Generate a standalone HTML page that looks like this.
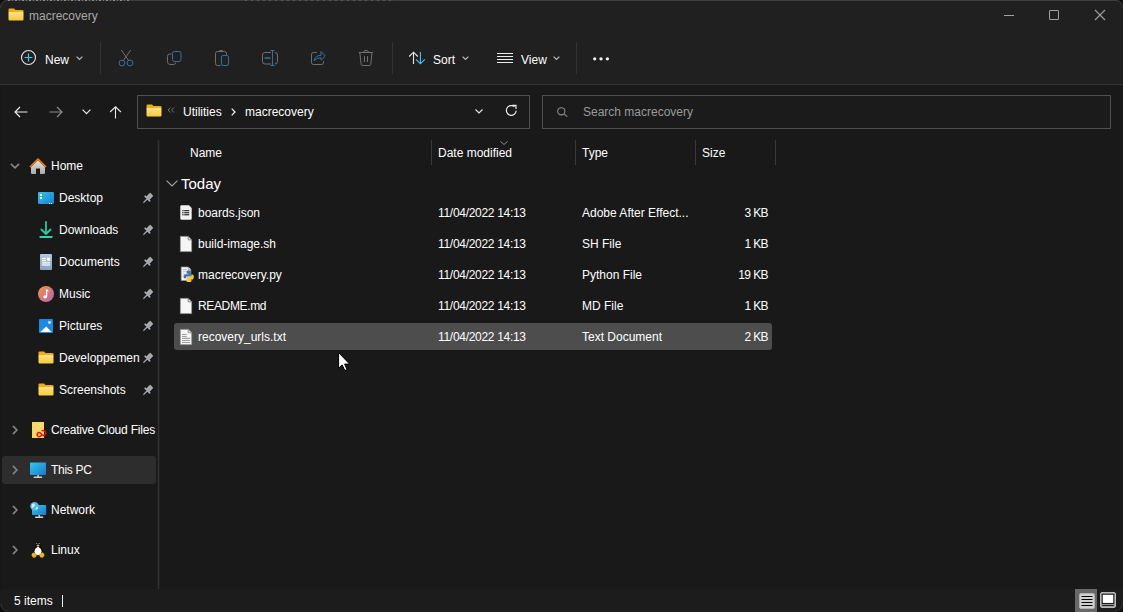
<!DOCTYPE html>
<html><head><meta charset="utf-8">
<style>
*{margin:0;padding:0;box-sizing:border-box}
html,body{width:1123px;height:612px;overflow:hidden;background:#191919;font-family:"Liberation Sans",sans-serif;color:#fff;position:relative}
.a{position:absolute}
.t{position:absolute;white-space:nowrap;font-size:12px;line-height:14px}
svg{position:absolute;overflow:visible}
.sep{position:absolute;width:1px;background:#3a3a3a}
.box{position:absolute;border:1px solid #4e4e4e;background:#1b1b1b}
</style></head><body>
<!-- title + toolbar -->
<div class="a" style="left:0;top:0;width:1123px;height:84px;background:#202020"></div>
<div class="a" style="left:0;top:84px;width:1123px;height:1px;background:#343434"></div>
<!-- top border row -->
<div class="a" style="left:0;top:0;width:1123px;height:1px;background:#3e3e3e"></div>
<div class="a" style="left:8px;top:0;width:122px;height:1px;background:repeating-linear-gradient(90deg,#8a8a8a 0 2px,#3a3a3a 2px 4px,#7a7a7a 4px 5px,#383838 5px 7px)"></div>
<div class="a" style="left:245px;top:0;width:150px;height:1px;background:repeating-linear-gradient(90deg,#5a5a5a 0 2px,#3a3a3a 2px 6px)"></div>
<svg style="left:0;top:0" width="9" height="9" viewBox="0 0 9 9"><path d="M0 0 H8 Q0.5 0.3 0 8 Z" fill="#0e0e0e"/><path d="M7.5 0.5 Q0.7 0.7 0.5 7.5" fill="none" stroke="#3a3a3a" stroke-width="1"/></svg>
<svg style="left:1114px;top:0" width="9" height="9" viewBox="0 0 9 9"><path d="M9 0 H1 Q8.5 0.3 9 8 Z" fill="#0e0e14"/><path d="M1.5 0.5 Q8.3 0.7 8.5 7.5" fill="none" stroke="#3a3a3a" stroke-width="1"/></svg>
<!-- title -->
<svg style="left:8px;top:8px" width="16" height="13" viewBox="0 0 16 13">
  <defs><linearGradient id="fg" x1="0" y1="0" x2="0" y2="1"><stop offset="0" stop-color="#ffe38a"/><stop offset="1" stop-color="#f9c93a"/></linearGradient></defs>
  <path d="M0.5 1.5 Q0.5 0.5 1.5 0.5 H6 L7.5 2 H14.5 Q15.5 2 15.5 3 V4 H0.5 Z" fill="#f2ae10"/>
  <path d="M0.5 4 H15.5 V11.5 Q15.5 12.5 14.5 12.5 H1.5 Q0.5 12.5 0.5 11.5 Z" fill="url(#fg)"/>
</svg>
<div class="t" style="left:29px;top:9px;color:#a8a8a8">macrecovery</div>

<!-- window controls -->
<div class="a" style="left:1004px;top:15px;width:10px;height:1px;background:#a0a0a0"></div>
<div class="a" style="left:1049px;top:10px;width:10px;height:10px;border:1px solid #a0a0a0;border-radius:1px"></div>
<svg style="left:1095px;top:10px" width="10" height="10" viewBox="0 0 10 10"><path d="M0 0 L10 10 M10 0 L0 10" stroke="#a0a0a0" stroke-width="1.1"/></svg>


<!-- toolbar -->
<svg style="left:0;top:0" width="1" height="1"></svg>
<svg style="left:21px;top:50px" width="15" height="15" viewBox="0 0 15 15">
  <circle cx="7.5" cy="7.5" r="7" fill="none" stroke="#e6e6e6" stroke-width="1.1"/>
  <path d="M7.5 3.6 V11.4 M3.6 7.5 H11.4" stroke="#4cc2ff" stroke-width="1.2"/>
</svg>
<div class="t" style="left:45px;top:53px">New</div>
<svg style="left:76px;top:56px" width="7" height="4" viewBox="0 0 7 4"><path d="M0.6 0.6 L3.5 3.4 L6.4 0.6" fill="none" stroke="#b8b8b8" stroke-width="1.3"/></svg>
<div class="sep" style="left:100px;top:42px;height:32px;background:#333"></div>

<!-- cut -->
<svg style="left:112px;top:44px" width="28" height="28" viewBox="0 0 28 28">
  <path d="M9.3 6 L17 17 M18.7 6 L11 17" stroke="#707070" stroke-width="1"/>
  <circle cx="10" cy="19" r="2.9" fill="none" stroke="#33709f" stroke-width="1"/>
  <circle cx="18" cy="19" r="2.9" fill="none" stroke="#33709f" stroke-width="1"/>
</svg>
<!-- copy -->
<svg style="left:160px;top:44px" width="28" height="28" viewBox="0 0 28 28">
  <path d="M11.5 10 H9.8 Q7.5 10 7.5 12.3 V17.8 Q7.5 20.5 10.2 20.5 H13.5 Q15.6 20.5 15.6 18.5" fill="none" stroke="#707070" stroke-width="1"/>
  <rect x="12.5" y="7.5" width="8.5" height="10" rx="2" fill="none" stroke="#33709f" stroke-width="1"/>
</svg>
<!-- paste -->
<svg style="left:208px;top:44px" width="28" height="28" viewBox="0 0 28 28">
  <path d="M12.5 21.5 H9.5 Q7.5 21.5 7.5 19.5 V9.5 Q7.5 7.5 9.5 7.5 H16.5 Q18.5 7.5 18.5 9.5 V10.8" fill="none" stroke="#707070" stroke-width="1"/>
  <path d="M10.8 7.8 Q10.8 6.5 13 6.5 Q15.2 6.5 15.2 7.8" fill="none" stroke="#707070" stroke-width="1"/>
  <rect x="13.5" y="11.5" width="7" height="10" rx="1.6" fill="none" stroke="#33709f" stroke-width="1"/>
</svg>
<!-- rename -->
<svg style="left:256px;top:44px" width="28" height="28" viewBox="0 0 28 28">
  <path d="M15 8.5 H9 Q6.5 8.5 6.5 11 V17.5 Q6.5 20 9 20 H15 M18.8 8.5 Q21.5 8.5 21.5 11 V17.5 Q21.5 20 18.8 20" fill="none" stroke="#707070" stroke-width="1"/>
  <path d="M8.5 14 H14.5" stroke="#33709f" stroke-width="1.5"/>
  <path d="M16.5 6.5 V21.5 M14.5 6.5 H18.5 M14.5 21.5 H18.5" stroke="#33709f" stroke-width="1"/>
</svg>
<!-- share -->
<svg style="left:304px;top:44px" width="28" height="28" viewBox="0 0 28 28">
  <path d="M12.8 8.5 H9.5 Q7.5 8.5 7.5 10.5 V18.5 Q7.5 20.5 9.5 20.5 H17.5 Q19.5 20.5 19.5 18.5 V17" fill="none" stroke="#707070" stroke-width="1"/>
  <path d="M10.2 16.6 Q11 11.5 17 11.3 V7.5 L21.3 12 L17 16.2 V13.8 Q12.5 13.6 10.2 16.6 Z" fill="none" stroke="#33709f" stroke-width="1" stroke-linejoin="round"/>
</svg>
<!-- delete -->
<svg style="left:352px;top:44px" width="28" height="28" viewBox="0 0 28 28">
  <path d="M6.8 8.5 H21" stroke="#707070" stroke-width="1"/>
  <path d="M11.5 8.3 Q11.5 6.5 14 6.5 Q16.5 6.5 16.5 8.3" fill="none" stroke="#707070" stroke-width="1"/>
  <path d="M7.8 8.8 L9.2 20.6 Q9.3 21.5 10.3 21.5 H17.6 Q18.6 21.5 18.7 20.6 L20 8.8" fill="none" stroke="#707070" stroke-width="1"/>
  <path d="M12.5 12.2 V18 M15.5 12.2 V18" stroke="#707070" stroke-width="1"/>
</svg>
<div class="sep" style="left:392px;top:42px;height:32px;background:#333"></div>

<!-- sort -->
<svg style="left:402px;top:44px" width="28" height="28" viewBox="0 0 28 28">
  <path d="M11.5 8.2 V20 M7.2 12.5 L11.5 8.2 L15.8 12.5" fill="none" stroke="#e8e8e8" stroke-width="1.1"/>
  <path d="M18.4 8 V19.8 M14 15.3 L18.4 19.8 L22.8 15.3" fill="none" stroke="#4cc2ff" stroke-width="1.1"/>
</svg>
<div class="t" style="left:433px;top:53px">Sort</div>
<svg style="left:462px;top:56px" width="7" height="4" viewBox="0 0 7 4"><path d="M0.6 0.6 L3.5 3.4 L6.4 0.6" fill="none" stroke="#b8b8b8" stroke-width="1.3"/></svg>

<!-- view -->
<svg style="left:497px;top:52px" width="16" height="12" viewBox="0 0 16 12">
  <path d="M0 1.5 H16 M0 4.5 H16 M0 7.5 H16 M0 10.5 H16" stroke="#ececec" stroke-width="1"/>
</svg>
<div class="t" style="left:521px;top:53px">View</div>
<svg style="left:553px;top:56px" width="7" height="4" viewBox="0 0 7 4"><path d="M0.6 0.6 L3.5 3.4 L6.4 0.6" fill="none" stroke="#b8b8b8" stroke-width="1.3"/></svg>
<div class="sep" style="left:576px;top:42px;height:32px;background:#333"></div>
<svg style="left:592px;top:56px" width="18" height="6" viewBox="0 0 18 6">
  <circle cx="2.7" cy="2.8" r="1.65" fill="#f0f0f0"/><circle cx="9" cy="2.8" r="1.65" fill="#f0f0f0"/><circle cx="15.4" cy="2.8" r="1.65" fill="#f0f0f0"/>
</svg>

<!-- address row -->
<svg style="left:14px;top:106px" width="14" height="12" viewBox="0 0 14 12">
  <path d="M13.5 6 H1 M6 1 L1 6 L6 11" fill="none" stroke="#e8e8e8" stroke-width="1.2"/>
</svg>
<svg style="left:49px;top:106px" width="14" height="12" viewBox="0 0 14 12">
  <path d="M0.5 6 H13 M8 1 L13 6 L8 11" fill="none" stroke="#8a8a8a" stroke-width="1.2"/>
</svg>
<svg style="left:82px;top:109px" width="9" height="6" viewBox="0 0 9 6">
  <path d="M0.6 0.6 L4.5 4.6 L8.4 0.6" fill="none" stroke="#e8e8e8" stroke-width="1.2"/>
</svg>
<svg style="left:109px;top:106px" width="12" height="13" viewBox="0 0 12 13">
  <path d="M6.5 12.5 V0.8 M1.1 6 L6.5 0.8 L11.9 6" fill="none" stroke="#e8e8e8" stroke-width="1.1"/>
</svg>
<div class="box" style="left:137px;top:95px;width:393px;height:34px"></div>
<svg style="left:146px;top:104px" width="16" height="13" viewBox="0 0 16 13">
  <path d="M0.5 1.5 Q0.5 0.5 1.5 0.5 H6 L7.5 2 H14.5 Q15.5 2 15.5 3 V4 H0.5 Z" fill="#f2ae10"/>
  <path d="M0.5 4 H15.5 V11.5 Q15.5 12.5 14.5 12.5 H1.5 Q0.5 12.5 0.5 11.5 Z" fill="url(#fg)"/>
</svg>
<svg style="left:167px;top:107px" width="8" height="6" viewBox="0 0 8 6">
  <path d="M3.5 0.5 L1 3 L3.5 5.5 M7 0.5 L4.5 3 L7 5.5" fill="none" stroke="#7a7a7a" stroke-width="0.9"/>
</svg>
<div class="t" style="left:183px;top:105px">Utilities</div>
<svg style="left:231px;top:108px" width="5" height="8" viewBox="0 0 5 8">
  <path d="M0.7 0.6 L4 4 L0.7 7.4" fill="none" stroke="#f0f0f0" stroke-width="1.3"/>
</svg>
<div class="t" style="left:245px;top:105px">macrecovery</div>
<svg style="left:475px;top:109px" width="8" height="5" viewBox="0 0 8 5">
  <path d="M0.5 0.5 L4 4 L7.5 0.5" fill="none" stroke="#e8e8e8" stroke-width="1.1"/>
</svg>
<svg style="left:505px;top:104px" width="13" height="13" viewBox="0 0 13 13">
  <path d="M11.2 6.8 A4.9 4.9 0 1 1 9.6 2.8" fill="none" stroke="#e8e8e8" stroke-width="1.2"/>
  <path d="M7.2 1.3 H11 V5.1" fill="none" stroke="#e8e8e8" stroke-width="1.2"/>
</svg>
<div class="box" style="left:542px;top:95px;width:569px;height:34px"></div>
<svg style="left:557px;top:107px" width="11" height="10" viewBox="0 0 11 10">
  <circle cx="4.3" cy="4.3" r="3.6" fill="none" stroke="#8a8a8a" stroke-width="1.1"/>
  <path d="M6.9 6.9 L10.3 9.6" stroke="#8a8a8a" stroke-width="1.1"/>
</svg>
<div class="t" style="left:583px;top:105px;color:#9a9a9a">Search macrecovery</div>

<!-- nav pane -->
<div class="a" style="left:157px;top:140px;width:3px;height:449px;background:#1f1f1f"></div><div class="a" style="left:158px;top:140px;width:1px;height:449px;background:#323232"></div>
<svg style="left:10px;top:163px" width="10" height="6" viewBox="0 0 10 6"><path d="M0.9 0.9 L5 4.9 L9.1 0.9" fill="none" stroke="#858585" stroke-width="1.6"/></svg>
<svg style="left:29px;top:158px" width="18" height="17" viewBox="0 0 18 17">
  <defs><linearGradient id="hg" x1="0" y1="0" x2="0" y2="1"><stop offset="0" stop-color="#e4e4e4"/><stop offset="1" stop-color="#a9a9a9"/></linearGradient></defs>
  <path d="M2 9 L9 2.2 L16 9 V15 Q16 16 15 16 H11 V10.5 H7 V16 H3 Q2 16 2 15 Z" fill="url(#hg)"/>
  <path d="M1 9 L9 1.2 L17 9" fill="none" stroke="#f47a0c" stroke-width="1.7" stroke-linejoin="round"/>
</svg>
<div class="t" style="left:51px;top:159px">Home</div>

<svg style="left:38px;top:192px" width="16" height="12" viewBox="0 0 16 12">
  <defs><linearGradient id="dg" x1="0" y1="0" x2="1" y2="1"><stop offset="0" stop-color="#31c3ea"/><stop offset="1" stop-color="#1a7fd0"/></linearGradient></defs>
  <rect x="0" y="0" width="16" height="12" rx="1.2" fill="url(#dg)"/>
  <rect x="2" y="2" width="2" height="2" fill="#fff"/><rect x="2" y="5" width="2" height="2" fill="#fff"/>
  <rect x="11" y="11" width="1" height="1" fill="#cfe"/><rect x="13" y="11" width="1" height="1" fill="#cfe"/>
</svg>
<div class="t" style="left:59px;top:191px">Desktop</div>
<svg style="left:141px;top:193px" width="12" height="12" viewBox="0 0 12 12"><g transform="rotate(45 6.3 5.7)" fill="#a3acb4"><rect x="4" y="-0.6" width="4.6" height="5.6" rx="0.6"/><rect x="2.4" y="4.6" width="7.8" height="1.8" rx="0.6"/><rect x="5.7" y="6" width="1.3" height="5.2"/></g></svg>
<svg style="left:39px;top:221px" width="14" height="17" viewBox="0 0 14 17">
  <path d="M7 1 V12.5 M2.4 8.5 L7 13 L11.6 8.5" fill="none" stroke="#2fc6a0" stroke-width="1.8" stroke-linecap="round" stroke-linejoin="round"/>
  <path d="M1.2 16 H12.8" stroke="#34d1a6" stroke-width="1.8" stroke-linecap="round"/>
</svg>
<div class="t" style="left:59px;top:223px">Downloads</div>
<svg style="left:141px;top:225px" width="12" height="12" viewBox="0 0 12 12"><g transform="rotate(45 6.3 5.7)" fill="#a3acb4"><rect x="4" y="-0.6" width="4.6" height="5.6" rx="0.6"/><rect x="2.4" y="4.6" width="7.8" height="1.8" rx="0.6"/><rect x="5.7" y="6" width="1.3" height="5.2"/></g></svg>
<svg style="left:40px;top:254px" width="12" height="16" viewBox="0 0 12 16">
  <defs><linearGradient id="docg" x1="0" y1="0" x2="0" y2="1"><stop offset="0" stop-color="#b3c9df"/><stop offset="1" stop-color="#8aa3bf"/></linearGradient></defs>
  <rect x="0" y="0" width="12" height="16" rx="1" fill="url(#docg)"/>
  <rect x="2" y="4" width="4" height="1.2" fill="#fff"/><rect x="2" y="6" width="4" height="1.2" fill="#fff"/>
  <rect x="7" y="3.8" width="3" height="3" fill="#fff"/>
  <rect x="2" y="8.3" width="8" height="1.2" fill="#fff"/><rect x="2" y="10.4" width="8" height="1.2" fill="#fff"/>
</svg>
<div class="t" style="left:59px;top:255px">Documents</div>
<svg style="left:141px;top:257px" width="12" height="12" viewBox="0 0 12 12"><g transform="rotate(45 6.3 5.7)" fill="#a3acb4"><rect x="4" y="-0.6" width="4.6" height="5.6" rx="0.6"/><rect x="2.4" y="4.6" width="7.8" height="1.8" rx="0.6"/><rect x="5.7" y="6" width="1.3" height="5.2"/></g></svg>
<svg style="left:38px;top:286px" width="16" height="16" viewBox="0 0 16 16">
  <defs><linearGradient id="mg" x1="0" y1="0" x2="1" y2="1"><stop offset="0.2" stop-color="#ec8a5a"/><stop offset="0.9" stop-color="#b866a8"/></linearGradient></defs>
  <circle cx="8" cy="8" r="8" fill="url(#mg)"/>
  <path d="M8.6 3.4 V10.2" stroke="#fff" stroke-width="1.4"/>
  <path d="M8.6 3.2 Q10.5 4 11 5.4 L9 5" fill="#fff"/>
  <ellipse cx="7.2" cy="10.8" rx="1.9" ry="1.6" fill="#fff"/>
</svg>
<div class="t" style="left:59px;top:287px">Music</div>
<svg style="left:141px;top:289px" width="12" height="12" viewBox="0 0 12 12"><g transform="rotate(45 6.3 5.7)" fill="#a3acb4"><rect x="4" y="-0.6" width="4.6" height="5.6" rx="0.6"/><rect x="2.4" y="4.6" width="7.8" height="1.8" rx="0.6"/><rect x="5.7" y="6" width="1.3" height="5.2"/></g></svg>
<svg style="left:39px;top:319px" width="14" height="14" viewBox="0 0 14 14">
  <rect x="0" y="0" width="14" height="14" rx="1" fill="#1a8be0"/>
  <path d="M1.3 13 L7.2 7.5 L12.6 13 Z" fill="#fff"/>
  <circle cx="10.5" cy="3.5" r="1.4" fill="#e8f4ff"/>
</svg>
<div class="t" style="left:59px;top:319px">Pictures</div>
<svg style="left:141px;top:321px" width="12" height="12" viewBox="0 0 12 12"><g transform="rotate(45 6.3 5.7)" fill="#a3acb4"><rect x="4" y="-0.6" width="4.6" height="5.6" rx="0.6"/><rect x="2.4" y="4.6" width="7.8" height="1.8" rx="0.6"/><rect x="5.7" y="6" width="1.3" height="5.2"/></g></svg><svg style="left:38px;top:351px" width="16" height="13" viewBox="0 0 16 13">
  <path d="M0.5 1.5 Q0.5 0.5 1.5 0.5 H6 L7.5 2 H14.5 Q15.5 2 15.5 3 V4 H0.5 Z" fill="#f2ae10"/>
  <path d="M0.5 4 H15.5 V11.5 Q15.5 12.5 14.5 12.5 H1.5 Q0.5 12.5 0.5 11.5 Z" fill="url(#fg)"/></svg>
<div class="t" style="left:59px;top:351px;width:81px;overflow:hidden">Developpement</div>
<svg style="left:141px;top:353px" width="12" height="12" viewBox="0 0 12 12"><g transform="rotate(45 6.3 5.7)" fill="#a3acb4"><rect x="4" y="-0.6" width="4.6" height="5.6" rx="0.6"/><rect x="2.4" y="4.6" width="7.8" height="1.8" rx="0.6"/><rect x="5.7" y="6" width="1.3" height="5.2"/></g></svg><svg style="left:38px;top:383px" width="16" height="13" viewBox="0 0 16 13">
  <path d="M0.5 1.5 Q0.5 0.5 1.5 0.5 H6 L7.5 2 H14.5 Q15.5 2 15.5 3 V4 H0.5 Z" fill="#f2ae10"/>
  <path d="M0.5 4 H15.5 V11.5 Q15.5 12.5 14.5 12.5 H1.5 Q0.5 12.5 0.5 11.5 Z" fill="url(#fg)"/></svg>
<div class="t" style="left:59px;top:383px">Screenshots</div>
<svg style="left:141px;top:385px" width="12" height="12" viewBox="0 0 12 12"><g transform="rotate(45 6.3 5.7)" fill="#a3acb4"><rect x="4" y="-0.6" width="4.6" height="5.6" rx="0.6"/><rect x="2.4" y="4.6" width="7.8" height="1.8" rx="0.6"/><rect x="5.7" y="6" width="1.3" height="5.2"/></g></svg><svg style="left:12px;top:425px" width="6" height="10" viewBox="0 0 6 10"><path d="M0.9 0.9 L4.9 5 L0.9 9.1" fill="none" stroke="#858585" stroke-width="1.6"/></svg>
<svg style="left:32px;top:422px" width="15" height="17" viewBox="0 0 15 17">
  <rect x="0" y="0" width="12" height="16" fill="#ffd466"/>
  <path d="M2 4 L5 1 M2 7.5 L8.5 1 M2 11 L10 3" stroke="#ffe7a0" stroke-width="0.8"/>
  <path d="M9.5 13.3 Q8.2 15.2 6.6 14.6 Q4.7 13.8 5.3 11.8 Q6.2 10 8 10.8 L10.3 12.8 Q12 14.2 13.4 12.6 Q14.4 11 13 9.4 Q11.5 8 10.2 8.6" fill="none" stroke="#e3120b" stroke-width="1.5" stroke-linecap="round"/>
</svg>
<div class="t" style="left:51px;top:423px;letter-spacing:-0.2px">Creative Cloud Files</div>

<div class="a" style="left:2px;top:456px;width:154px;height:28px;background:#2d2d2d;border-radius:3px"></div>
<svg style="left:12px;top:465px" width="6" height="10" viewBox="0 0 6 10"><path d="M0.9 0.9 L4.9 5 L0.9 9.1" fill="none" stroke="#858585" stroke-width="1.6"/></svg>
<svg style="left:30px;top:462px" width="16" height="16" viewBox="0 0 16 16">
  <defs><linearGradient id="pcg" x1="0" y1="0" x2="1" y2="1"><stop offset="0" stop-color="#32c8e8"/><stop offset="1" stop-color="#1a78d0"/></linearGradient></defs>
  <rect x="0" y="0.5" width="16" height="12.5" rx="0.8" fill="url(#pcg)"/>
  <rect x="7.3" y="13" width="1.6" height="2" fill="#c8c8c8"/>
  <rect x="3.6" y="14.6" width="8.6" height="1.3" rx="0.6" fill="#d2d2d2"/>
</svg>
<div class="t" style="left:51px;top:463px;letter-spacing:-0.3px">This PC</div>
<svg style="left:12px;top:505px" width="6" height="10" viewBox="0 0 6 10"><path d="M0.9 0.9 L4.9 5 L0.9 9.1" fill="none" stroke="#858585" stroke-width="1.6"/></svg>
<svg style="left:30px;top:502px" width="17" height="17" viewBox="0 0 17 17">
  <rect x="2" y="3" width="14.2" height="10" rx="0.8" fill="url(#pcg)"/>
  <rect x="8.5" y="13" width="1.6" height="2" fill="#c8c8c8"/>
  <rect x="5" y="14.6" width="8.4" height="1.3" rx="0.6" fill="#d2d2d2"/>
  <circle cx="4.5" cy="4.3" r="4.2" fill="#5cb8e8"/>
  <path d="M1.8 2.5 Q3 1 4.6 2 Q5.5 4 3.5 5 Q2.5 6.5 1.6 5.8 Z M6 5.5 Q7.5 4.5 8.2 6 Q7 8 5.5 7.5 Z" fill="#d8f0ff"/>
</svg>
<div class="t" style="left:51px;top:503px">Network</div>
<svg style="left:12px;top:545px" width="6" height="10" viewBox="0 0 6 10"><path d="M0.9 0.9 L4.9 5 L0.9 9.1" fill="none" stroke="#858585" stroke-width="1.6"/></svg>
<svg style="left:31px;top:541px" width="14" height="18" viewBox="0 0 14 18">
  <path d="M7 0.8 Q9.4 0.8 9.6 3.4 Q9.8 5.2 10.8 6.8 Q12.6 9.6 12 13 L2 13 Q1.4 9.6 3.2 6.8 Q4.2 5.2 4.4 3.4 Q4.6 0.8 7 0.8 Z" fill="#0a0a0a"/>
  <path d="M5 2.6 Q6 2.1 6.6 3 M7.4 3 Q8 2.1 9 2.6" fill="none" stroke="#9a9a9a" stroke-width="0.9"/>
  <path d="M7 5.6 Q10 7.2 10.6 10.6 Q10.4 13.6 7 14.2 Q3.6 13.6 3.4 10.6 Q4 7.2 7 5.6 Z" fill="#fff"/>
  <path d="M5.1 4.2 Q7 3.3 8.9 4.2 L7 5.8 Z" fill="#f1b320"/>
  <path d="M0.4 14.2 Q1 11.2 2.8 11.4 Q4.8 12.2 5.8 14.8 Q4.6 17.2 2 16.6 Z M13.6 14.2 Q13 11.2 11.2 11.4 Q9.2 12.2 8.2 14.8 Q9.4 17.2 12 16.6 Z" fill="#f0b21e"/>
</svg>
<div class="t" style="left:51px;top:543px">Linux</div>

<!-- file list header -->
<div class="t" style="left:190px;top:146px">Name</div>
<div class="sep" style="left:431px;top:140px;height:25px;background:#3a3a3a"></div>
<svg style="left:500px;top:141px" width="8" height="4" viewBox="0 0 8 4"><path d="M0.5 0.5 L4 3.5 L7.5 0.5" fill="none" stroke="#9a9a9a" stroke-width="0.9"/></svg>
<div class="t" style="left:438px;top:146px">Date modified</div>
<div class="sep" style="left:575px;top:140px;height:25px;background:#3a3a3a"></div>
<div class="t" style="left:582px;top:146px">Type</div>
<div class="sep" style="left:695px;top:140px;height:25px;background:#3a3a3a"></div>
<div class="t" style="left:702px;top:146px">Size</div>
<div class="sep" style="left:775px;top:140px;height:25px;background:#3a3a3a"></div>

<svg style="left:166px;top:180px" width="12" height="7" viewBox="0 0 12 7"><path d="M0.6 0.6 L6 6 L11.4 0.6" fill="none" stroke="#a8a8a8" stroke-width="1.1"/></svg>
<div class="t" style="left:181px;top:175px;font-size:15px;line-height:17px">Today</div>
<div class="a" style="left:174px;top:323px;width:598px;height:27px;background:#4d4d4d;border-radius:3px"></div>
<svg style="left:180px;top:205px" width="12" height="15" viewBox="0 0 12 15">
  <path d="M1.5 0.3 H9 L11.7 3 V13.5 Q11.7 14.7 10.5 14.7 H1.5 Q0.3 14.7 0.3 13.5 V1.5 Q0.3 0.3 1.5 0.3 Z" fill="#f2f2f2"/>
  <rect x="2.2" y="5" width="1.4" height="1.3" fill="#3a3a3a"/><rect x="4.2" y="5" width="5" height="1.3" fill="#3a3a3a"/>
  <rect x="2.2" y="7.1" width="1.4" height="1.3" fill="#3a3a3a"/><rect x="4.2" y="7.1" width="5" height="1.3" fill="#3a3a3a"/>
  <rect x="2.2" y="9.1" width="1.4" height="1.3" fill="#3a3a3a"/><rect x="4.2" y="9.1" width="5" height="1.3" fill="#3a3a3a"/></svg>
<div class="t" style="left:198px;top:206px">boards.json</div>
<div class="t" style="left:438px;top:206px;letter-spacing:-0.3px">11/04/2022 14:13</div>
<div class="t" style="left:582px;top:206px">Adobe After Effect...</div>
<div class="t" style="left:668px;width:100px;text-align:right;top:206px;letter-spacing:-0.6px">3 KB</div>
<svg style="left:180px;top:236px" width="12" height="16" viewBox="0 0 12 16">
  <path d="M0.4 0.4 H8.2 L11.6 3.8 V15.6 H0.4 Z" fill="#f5f5f5" stroke="#9a9a9a" stroke-width="0.8"/>
  <path d="M8.2 0.4 V3.8 H11.6" fill="none" stroke="#7a7a7a" stroke-width="0.9"/></svg>
<div class="t" style="left:198px;top:237px">build-image.sh</div>
<div class="t" style="left:438px;top:237px;letter-spacing:-0.3px">11/04/2022 14:13</div>
<div class="t" style="left:582px;top:237px">SH File</div>
<div class="t" style="left:668px;width:100px;text-align:right;top:237px;letter-spacing:-0.6px">1 KB</div>
<svg style="left:180px;top:266px" width="15" height="16" viewBox="0 0 15 16">
  <path d="M1.2 1 H8.3 L10.8 3.5 V14.5 H1.2 Z" fill="#f5f5f5" stroke="#9a9a9a" stroke-width="0.7"/>
  <path d="M8.3 1 V3.5 H10.8" fill="#dcdcdc" stroke="#8a8a8a" stroke-width="0.6"/>
  <path d="M2.8 3.5 H6.8 M2.8 5.3 H6.8 M2.8 7.1 H4.5 M2.8 8.9 H3.5 M2.8 10.7 H3.5" stroke="#b8b8b8" stroke-width="0.8"/>
  <path d="M6.6 5.8 Q6.6 4.6 8.2 4.6 H9.6 Q10.8 4.6 10.8 5.8 V9.6 Q10.8 10.6 9.6 10.6 H7.2 Q5.8 10.6 5.8 12 V12.6 H4.9 Q3.6 12.6 3.6 10.5 Q3.6 8.3 5 8.3 H8.6 V7.7 H6.6 Z" fill="#3775b6"/>
  <path d="M12.6 16 Q12.6 15.3 12.6 14.8 Q12.6 13.6 11 13.6 H9.6 V14.2 H11.6 V14.8 Q11.6 16 10 16 H7.6 Q6.4 16 6.4 14.8 V11.8 Q6.4 10.8 7.6 10.8 H10 Q11.4 10.8 11.4 9.4 V8.6 H12.3 Q13.8 8.6 13.8 11 Q13.8 13.2 12.5 13.2" fill="#f6c93d"/>
</svg>
<div class="t" style="left:198px;top:268px">macrecovery.py</div>
<div class="t" style="left:438px;top:268px;letter-spacing:-0.3px">11/04/2022 14:13</div>
<div class="t" style="left:582px;top:268px">Python File</div>
<div class="t" style="left:668px;width:100px;text-align:right;top:268px;letter-spacing:-0.6px">19 KB</div>
<svg style="left:180px;top:298px" width="12" height="16" viewBox="0 0 12 16">
  <path d="M0.4 0.4 H8.2 L11.6 3.8 V15.6 H0.4 Z" fill="#f5f5f5" stroke="#9a9a9a" stroke-width="0.8"/>
  <path d="M8.2 0.4 V3.8 H11.6" fill="none" stroke="#7a7a7a" stroke-width="0.9"/></svg>
<div class="t" style="left:198px;top:299px;letter-spacing:-0.35px">README.md</div>
<div class="t" style="left:438px;top:299px;letter-spacing:-0.3px">11/04/2022 14:13</div>
<div class="t" style="left:582px;top:299px">MD File</div>
<div class="t" style="left:668px;width:100px;text-align:right;top:299px;letter-spacing:-0.6px">1 KB</div>
<svg style="left:180px;top:329px" width="12" height="16" viewBox="0 0 12 16">
  <path d="M0.4 0.4 H8.2 L11.6 3.8 V15.6 H0.4 Z" fill="#f7f7f7" stroke="#9a9a9a" stroke-width="0.8"/>
  <path d="M8.2 0.4 V3.8 H11.6" fill="#dcdcdc" stroke="#8a8a8a" stroke-width="0.8"/>
  <path d="M2 7.5 H6.7 M2 9.4 H10 M2 11.5 H10 M2 13.5 H10 M2 15.5 H10" stroke="#a0a0a0" stroke-width="1.1"/>
  <path d="M2 5.5 H6.7" stroke="#a0a0a0" stroke-width="1.1"/></svg>
<div class="t" style="left:198px;top:330px">recovery_urls.txt</div>
<div class="t" style="left:438px;top:330px;letter-spacing:-0.3px">11/04/2022 14:13</div>
<div class="t" style="left:582px;top:330px">Text Document</div>
<div class="t" style="left:668px;width:100px;text-align:right;top:330px;letter-spacing:-0.6px">2 KB</div>

<!-- cursor -->
<svg style="left:337px;top:351px" width="16" height="22" viewBox="0 0 16 22">
  <path d="M1.6 1.6 V17.2 L5.2 13.9 L7.9 19.6 L10.1 18.6 L7.6 13.1 H12.6 Z" fill="#fff" stroke="#000" stroke-width="1"/>
</svg>

<!-- status bar -->
<div class="a" style="left:0;top:589px;width:1123px;height:23px;background:#1c1c1c"></div>
<div class="t" style="left:14px;top:594px">5 items</div>
<div class="a" style="left:62px;top:595px;width:1px;height:12px;background:#f0f0f0"></div>
<div class="a" style="left:1075px;top:589px;width:22px;height:23px;background:#686868"></div>
<svg style="left:1079px;top:593px" width="16" height="16" viewBox="0 0 16 16">
  <rect x="0.5" y="0.5" width="15" height="15" rx="1.5" fill="#d0d0d0" stroke="#b0b0b0"/>
  <path d="M2.5 3.5 H13.5 M2.5 6.5 H13.5 M2.5 9.5 H13.5 M2.5 12.5 H13.5" stroke="#000" stroke-width="1.1"/>
</svg>
<svg style="left:1100px;top:592px" width="16" height="16" viewBox="0 0 16 16">
  <rect x="0.5" y="0.5" width="15" height="15" rx="1.5" fill="#a0a0a0" stroke="#b8b8b8"/>
  <rect x="2.2" y="2.2" width="11.6" height="9.2" fill="#fff" stroke="#000" stroke-width="0.9"/>
  <path d="M2.2 13.4 H13.8" stroke="#000" stroke-width="0.9"/>
</svg>

<svg style="left:0;top:602px" width="10" height="10" viewBox="0 0 10 10"><path d="M0 10 H9 Q0.5 9.5 0 1 Z" fill="#0e0e0e"/><path d="M8.5 9.2 Q1.2 9 0.8 1.5" fill="none" stroke="#333" stroke-width="1"/></svg>
<svg style="left:1113px;top:602px" width="10" height="10" viewBox="0 0 10 10"><path d="M10 10 H1 Q9.5 9.5 10 1 Z" fill="#0e0e0e"/><path d="M1.5 9.2 Q8.8 9 9.2 1.5" fill="none" stroke="#333" stroke-width="1"/></svg>
<div class="a" style="left:0;top:85px;width:2px;height:504px;background:#171717"></div>
</body></html>
